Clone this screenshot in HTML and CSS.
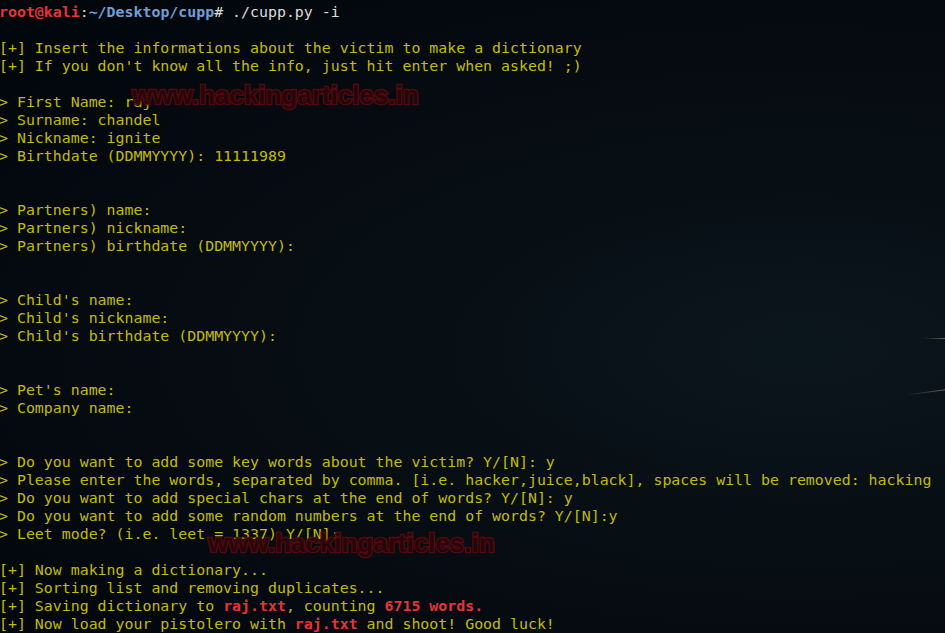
FILE: index.html
```html
<!DOCTYPE html>
<html lang="en">
<head>
    <meta charset="UTF-8">
    <title>cupp.py -i</title>
    <link rel="stylesheet" href="styles.css">
</head>
<body>
    <div class="terminal">
        <div class="line"><span class="user">root@kali</span><span class="sep">:</span><span class="path">~/Desktop/cupp</span><span class="cmd"># ./cupp.py -i</span></div>
        <div class="line"> </div>
        <div class="line">[+] Insert the informations about the victim to make a dictionary</div>
        <div class="line">[+] If you don't know all the info, just hit enter when asked! ;)</div>
        <div class="line"> </div>
        <div class="line">&gt; First Name: raj</div>
        <div class="line">&gt; Surname: chandel</div>
        <div class="line">&gt; Nickname: ignite</div>
        <div class="line">&gt; Birthdate (DDMMYYYY): 11111989</div>
        <div class="line"> </div>
        <div class="line"> </div>
        <div class="line">&gt; Partners) name:</div>
        <div class="line">&gt; Partners) nickname:</div>
        <div class="line">&gt; Partners) birthdate (DDMMYYYY):</div>
        <div class="line"> </div>
        <div class="line"> </div>
        <div class="line">&gt; Child's name:</div>
        <div class="line">&gt; Child's nickname:</div>
        <div class="line">&gt; Child's birthdate (DDMMYYYY):</div>
        <div class="line"> </div>
        <div class="line"> </div>
        <div class="line">&gt; Pet's name:</div>
        <div class="line">&gt; Company name:</div>
        <div class="line"> </div>
        <div class="line"> </div>
        <div class="line">&gt; Do you want to add some key words about the victim? Y/[N]: y</div>
        <div class="line">&gt; Please enter the words, separated by comma. [i.e. hacker,juice,black], spaces will be removed: hacking</div>
        <div class="line">&gt; Do you want to add special chars at the end of words? Y/[N]: y</div>
        <div class="line">&gt; Do you want to add some random numbers at the end of words? Y/[N]:y</div>
        <div class="line">&gt; Leet mode? (i.e. leet = 1337) Y/[N]:</div>
        <div class="line"> </div>
        <div class="line">[+] Now making a dictionary...</div>
        <div class="line">[+] Sorting list and removing duplicates...</div>
        <div class="line">[+] Saving dictionary to <span class="hl">raj.txt</span>, counting <span class="hl">6715 words.</span></div>
        <div class="line">[+] Now load your pistolero with <span class="hl">raj.txt</span> and shoot! Good luck!</div>

        <div class="watermark wm-top">www.hackingarticles.in</div>
        <div class="watermark wm-bottom">www.hackingarticles.in</div>
        <div class="streak streak-one"></div>
        <div class="streak streak-two"></div>
    </div>
</body>
</html>
```

FILE: styles.css
```css
html, body {
    margin: 0;
    height: 100%;
    overflow: hidden;
}
body {
    background-color: #03080d;
    background-image: radial-gradient(ellipse at 85% 55%, #0b161c 0%, #060d13 45%, #02060b 100%);
}
.terminal {
    position: relative;
    height: 100%;
    padding-top: 3px;
    margin-left: -1px;
    box-sizing: border-box;
    font-family: "DejaVu Sans Mono", monospace;
    font-size: 14.9px;
    line-height: 18px;
    color: #c4bc00;
}
.line {
    height: 18px;
    white-space: pre;
}
.user {
    color: #e8323a;
    font-weight: bold;
}
.sep {
    color: #d0d0d0;
}
.path {
    color: #6f9fd8;
    font-weight: bold;
}
.cmd {
    color: #dcdcdc;
}
.hl {
    color: #e8323a;
    font-weight: bold;
}
.watermark {
    position: absolute;
    font-family: "Liberation Sans", Arial, sans-serif;
    font-weight: bold;
    font-size: 26px;
    line-height: 30px;
    color: #2c0508;
    -webkit-text-stroke: 2.5px #5a0b11;
    paint-order: stroke fill;
    opacity: 0.92;
}
.wm-top {
    left: 133px;
    top: 80px;
}
.wm-bottom {
    left: 209px;
    top: 528px;
}
.streak {
    position: absolute;
    height: 1px;
    background: linear-gradient(to right, rgba(120, 100, 80, 0), rgba(140, 120, 95, 0.8));
}
.streak-one {
    right: -1px;
    top: 338px;
    width: 22px;
}
.streak-two {
    right: -1px;
    top: 389px;
    width: 40px;
    transform: rotate(-8deg);
    transform-origin: right center;
}
```
